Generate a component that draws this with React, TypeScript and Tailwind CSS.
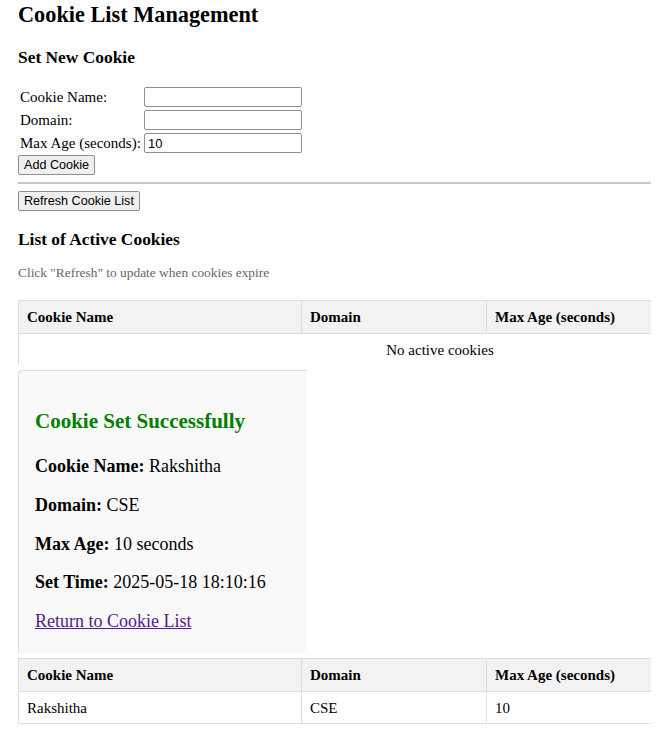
import React from 'react';

// Cookie list page: form, active cookies table, success panel, result table

const serif = "font-['Liberation_Serif','Times_New_Roman',serif]";
const sans = "font-['Liberation_Sans',Arial,sans-serif]";

interface CookieRow {
  name: string;
  domain: string;
  maxAge: string;
}

const cookies: CookieRow[] = [{ name: 'Rakshitha', domain: 'CSE', maxAge: '10' }];

function FormRow({ label, value }: { label: string; value?: string }) {
  return (
    <div className="flex h-[20px] items-center">
      <label className="w-[126px] pl-[2px] text-[15px] leading-[20px]">{label}</label>
      <input
        readOnly
        value={value ?? ''}
        className={`${sans} h-[20px] w-[158px] rounded-[2px] border border-[#8f8f8f] bg-white px-[3px] text-[13px] text-black outline-none`}
      />
    </div>
  );
}

function Button({ children }: { children: React.ReactNode }) {
  return (
    <button
      className={`${sans} h-[20px] rounded-[2px] border border-[#8f8f8f] bg-[#efefef] px-[5px] text-[12.6px] leading-[18px] text-black`}
    >
      {children}
    </button>
  );
}

function HeaderRow() {
  return (
    <tr className="bg-[#f2f2f2]">
      <th className="w-[283px] border border-[#dedede] px-[8px] py-[8px] text-left text-[15px] font-bold leading-[16px]">
        Cookie Name
      </th>
      <th className="w-[185px] border border-[#dedede] px-[8px] py-[8px] text-left text-[15px] font-bold leading-[16px]">
        Domain
      </th>
      <th className="border border-[#dedede] px-[8px] py-[8px] text-left text-[15px] font-bold leading-[16px]">
        Max Age (seconds)
      </th>
    </tr>
  );
}

export default function App() {
  return (
    <div className={`${serif} min-h-[733px] bg-white pl-[18px] pt-[2px] text-black`}>
      <div className="w-[633px] overflow-hidden">
        <h1 className="text-[22.3px] font-bold leading-[26px]">Cookie List Management</h1>
        <h2 className="mt-[19px] text-[17.4px] font-bold leading-[20px]">Set New Cookie</h2>

        {/* Set cookie form */}
        <form className="mt-[20px] flex flex-col gap-[3px]" onSubmit={(e) => e.preventDefault()}>
          <FormRow label="Cookie Name:" />
          <FormRow label="Domain:" />
          <FormRow label="Max Age (seconds):" value="10" />
        </form>
        <div className="mt-[2px] flex">
          <Button>Add Cookie</Button>
        </div>

        <hr className="mt-[7px] border-0 border-t-2 border-[#c9c9c9]" />

        <div className="mt-[7px] flex">
          <Button>Refresh Cookie List</Button>
        </div>

        <h3 className="mt-[18px] text-[17.4px] font-bold leading-[20px]">List of Active Cookies</h3>
        <p className="mt-[15.5px] text-[13.4px] leading-[16px] text-[#666]">
          Click "Refresh" to update when cookies expire
        </p>

        {/* Active cookies table */}
        <table className="mt-[19px] w-[844px] border-collapse">
          <thead>
            <HeaderRow />
          </thead>
          <tbody>
            <tr>
              <td
                colSpan={3}
                className="border-x border-t border-[#dedede] px-[8px] pb-[7px] pt-[8px] text-center text-[15px] leading-[16px]"
              >
                No active cookies
              </td>
            </tr>
          </tbody>
        </table>

        {/* Success panel */}
        <div className="mt-[5px] h-[283px] w-[289px] overflow-hidden rounded-tl-[4px] border-l border-t border-[#dedede] bg-[#f9f9f9] pl-[16px] pt-[38px]">
          <h3 className="text-[21px] font-bold leading-[24px] text-[#008000]">Cookie Set Successfully</h3>
          <div className="mt-[23.5px] flex flex-col gap-[17.75px] text-[18px] leading-[21px]">
            <p>
              <b>Cookie Name:</b> Rakshitha
            </p>
            <p>
              <b>Domain:</b> CSE
            </p>
            <p>
              <b>Max Age:</b> 10 seconds
            </p>
            <p>
              <b>Set Time:</b> 2025-05-18 18:10:16
            </p>
            <p>
              <a href="#" className="text-[#551a8b] underline">
                Return to Cookie List
              </a>
            </p>
          </div>
        </div>

        {/* Cookie list after set */}
        <table className="mt-[5px] w-[844px] border-collapse">
          <thead>
            <HeaderRow />
          </thead>
          <tbody>
            {cookies.map((c) => (
              <tr key={c.name}>
                <td className="border border-[#dedede] px-[8px] pb-[7px] pt-[8px] text-[15px] leading-[16px]">{c.name}</td>
                <td className="border border-[#dedede] px-[8px] pb-[7px] pt-[8px] text-[15px] leading-[16px]">{c.domain}</td>
                <td className="border border-[#dedede] px-[8px] pb-[7px] pt-[8px] text-[15px] leading-[16px]">{c.maxAge}</td>
              </tr>
            ))}
          </tbody>
        </table>
      </div>
    </div>
  );
}
